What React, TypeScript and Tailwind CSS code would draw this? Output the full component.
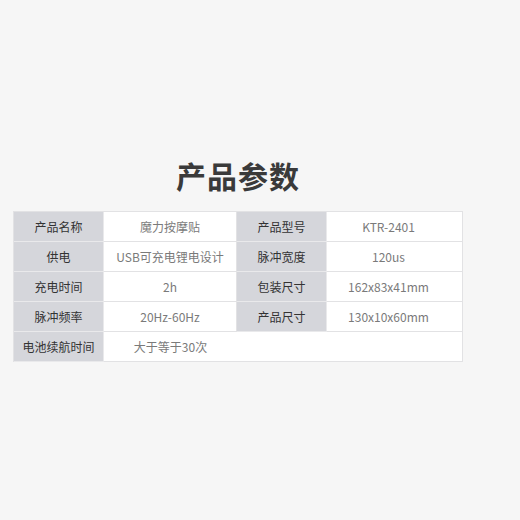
import React from "react";

const rows: [string, string, string, string][] = [
  ["产品名称", "魔力按摩贴", "产品型号", "KTR-2401"],
  ["供电", "USB可充电锂电设计", "脉冲宽度", "120us"],
  ["充电时间", "2h", "包装尺寸", "162x83x41mm"],
  ["脉冲频率", "20Hz-60Hz", "产品尺寸", "130x10x60mm"],
];

export default function App() {
  return (
    <div
      className="w-[520px] h-[520px] bg-[#f6f6f6] flex flex-col items-start pt-[160px] pl-[13px]"
      style={{ fontFamily: '"Noto Sans CJK SC", "Noto Sans", sans-serif' }}
    >
      <div className="w-[450px] h-[30px] leading-[30px] text-center text-[30px] font-bold text-[#3a3a3a] tracking-[1px]">
        产品参数
      </div>
      <div className="mt-[21px] w-[450px] grid grid-cols-[90px_133px_90px_136px] border-l border-t border-[#e2e2e4] text-[12px]">
        {rows.map((r, i) => (
          <React.Fragment key={i}>
            <div className="h-[30px] flex items-center justify-center bg-[#d5d6db] border-r border-b border-[#e9e9eb] text-[#333333]">
              {r[0]}
            </div>
            <div className="h-[30px] flex items-center justify-center bg-white border-r border-b border-[#e2e2e4] text-[#7a7a7a]">
              {r[1]}
            </div>
            <div className="h-[30px] flex items-center justify-center bg-[#d5d6db] border-r border-b border-[#e9e9eb] text-[#333333]">
              {r[2]}
            </div>
            <div className="h-[30px] flex items-center justify-center pr-[12px] bg-white border-r border-b border-[#e2e2e4] text-[#7a7a7a]">
              {r[3]}
            </div>
          </React.Fragment>
        ))}
        <div className="h-[30px] flex items-center justify-center bg-[#d5d6db] border-r border-b border-[#e9e9eb] text-[#333333]">
          电池续航时间
        </div>
        <div className="col-span-3 h-[30px] flex items-center bg-white border-r border-b border-[#e2e2e4] text-[#7a7a7a]">
          <div className="w-[133px] text-center">大于等于30次</div>
        </div>
      </div>
    </div>
  );
}
